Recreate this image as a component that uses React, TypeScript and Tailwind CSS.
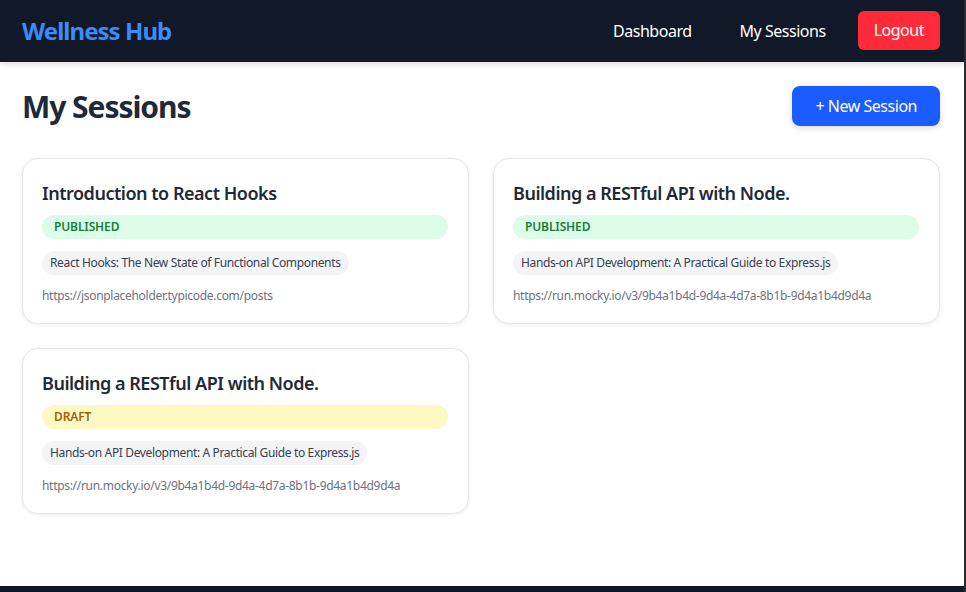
import React from "react";

type Session = {
  title: string;
  status: "PUBLISHED" | "DRAFT";
  tag: string;
  url: string;
};

const sessions: Session[] = [
  {
    title: "Introduction to React Hooks",
    status: "PUBLISHED",
    tag: "React Hooks: The New State of Functional Components",
    url: "https://jsonplaceholder.typicode.com/posts",
  },
  {
    title: "Building a RESTful API with Node.",
    status: "PUBLISHED",
    tag: "Hands-on API Development: A Practical Guide to Express.js",
    url: "https://run.mocky.io/v3/9b4a1b4d-9d4a-4d7a-8b1b-9d4a1b4d9d4a",
  },
  {
    title: "Building a RESTful API with Node.",
    status: "DRAFT",
    tag: "Hands-on API Development: A Practical Guide to Express.js",
    url: "https://run.mocky.io/v3/9b4a1b4d-9d4a-4d7a-8b1b-9d4a1b4d9d4a",
  },
];

function Card({ s }: { s: Session }) {
  const published = s.status === "PUBLISHED";
  return (
    <div className="flex flex-col rounded-2xl border border-[#e5e7eb] bg-white pl-[19px] pr-5 pt-5 pb-[18px] shadow-[0_1px_4px_rgba(0,0,0,0.08)]">
      <h3 className="h-[28px] text-[18px] font-semibold leading-[28px] text-[#1f2937]">{s.title}</h3>
      <div
        className={
          published
            ? "mt-2 flex h-6 items-center rounded-full bg-[#dcfce7] px-3 text-[12px] font-semibold tracking-[-0.01em] text-[#15803d]"
            : "mt-2 flex h-6 items-center rounded-full bg-[#fef9c3] px-3 text-[12px] font-semibold tracking-[-0.01em] text-[#a16207]"
        }
      >
        {s.status}
      </div>
      <div className="mt-3 flex">
        <span className="flex h-6 items-center rounded-full bg-[#f3f4f6] px-2 text-[12px] tracking-[-0.03em] text-[#374151]">
          {s.tag}
        </span>
      </div>
      <p className="mt-3 h-[18px] text-[12px] leading-[18px] tracking-[-0.025em] text-[#6b7280]">{s.url}</p>
    </div>
  );
}

export default function App() {
  return (
    <div
      className="flex h-[592px] w-[966px] overflow-hidden bg-white tracking-[-0.03em]"
      style={{ fontFamily: '"Segoe UI", "Noto Sans", "Open Sans", sans-serif' }}
    >
      <div className="flex min-w-0 flex-1 flex-col overflow-hidden">
        <nav className="relative z-10 flex h-[62px] shrink-0 items-center justify-between bg-[#111827] pl-[22px] pr-[24px] shadow-[0_2px_6px_rgba(0,0,0,0.15)]">
          <span className="text-[24px] font-bold tracking-[-0.04em] text-[#3b8bfa]">Wellness Hub</span>
          <div className="flex items-center gap-4">
            <a className="px-4 py-2 text-[16px] text-white">Dashboard</a>
            <a className="px-4 py-2 text-[16px] text-white">My Sessions</a>
            <button className="mb-[2px] h-[39px] rounded-md bg-[#ff2b3a] px-4 text-[16px] text-white">Logout</button>
          </div>
        </nav>
        <main className="h-[524px] shrink-0 pl-[22px] pr-[24px] pt-6">
          <div className="mb-8 flex h-10 items-center justify-between">
            <h1 className="text-[30px] font-bold tracking-[-0.035em] text-[#1f2937]">My Sessions</h1>
            <button className="h-10 rounded-lg bg-[#1a5cff] px-[23px] text-[16px] text-white shadow-[0_2px_6px_rgba(0,0,0,0.15)]">
              + New Session
            </button>
          </div>
          <div className="grid grid-cols-2 gap-x-6 gap-y-[24px]">
            {sessions.map((s, i) => (
              <Card key={i} s={s} />
            ))}
          </div>
        </main>
        <footer className="h-[40px] shrink-0 bg-[#111827]" />
      </div>
      <div className="w-[2px] shrink-0 bg-[#2b2b2b]" />
    </div>
  );
}
